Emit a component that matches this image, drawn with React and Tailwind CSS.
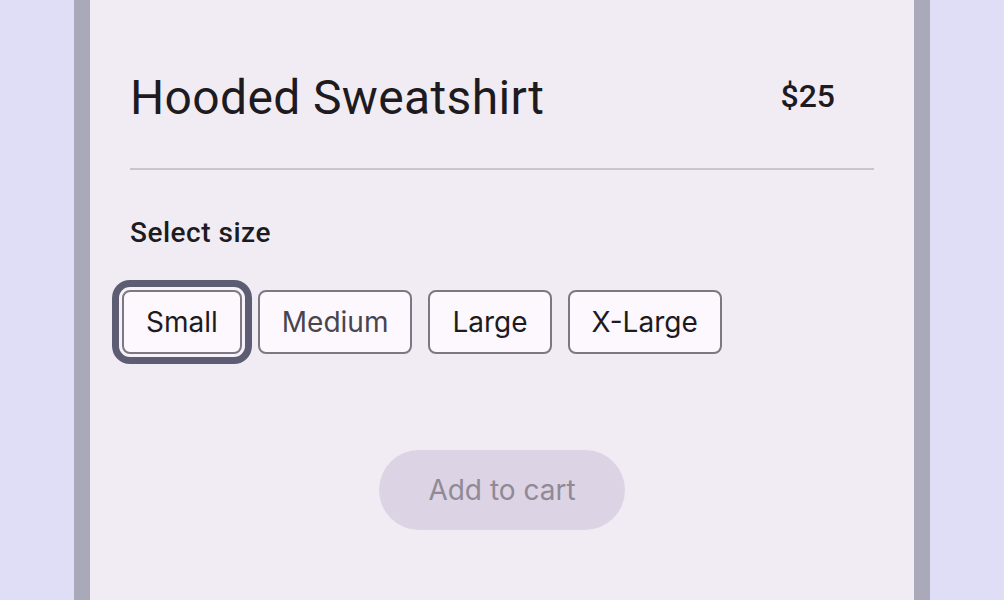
import React from "react";

const sizes = ["Small", "Medium", "Large", "X-Large"];

export default function App() {
  return (
    <div className="h-[600px] w-full overflow-hidden bg-[#e0def7] flex justify-center font-['Roboto',sans-serif]">
      <div className="w-[856px] h-[600px] bg-[#aaa9b9] px-[16px]">
        <div className="h-full bg-[#f1ecf4] px-[40px] pt-[66px]">
          <div className="flex items-start justify-between">
            <h1 className="text-[48px] leading-[64px] font-normal tracking-[0.35px] text-[#1d1b20]">
              Hooded Sweatshirt
            </h1>
            <div className="mt-[6px] mr-[39px] text-[32px] leading-[48px] font-medium text-[#1d1b20]">
              $25
            </div>
          </div>
          <div className="mt-[38px] h-[2px] bg-[#cac4d0]" />
          <div className="mt-[43px] text-[28px] leading-[40px] font-medium tracking-[0.5px] text-[#1d1b20]">
            Select size
          </div>
          <div className="mt-[37px] -ml-[8px] flex gap-[16px] font-['Inter',sans-serif]">
            {sizes.map((s, i) => (
              <button
                key={s}
                className={
                  i === 0
                    ? "h-[64px] px-[22px] rounded-[8px] border-2 border-[#7d7784] bg-[#fdf8fe] text-[28px] font-normal text-[#1d1b20] shadow-[0_0_0_3px_#f7f2f9,0_0_0_10px_#5c5d72]"
                    : i === 1
                    ? "h-[64px] px-[22px] rounded-[8px] border-2 border-[#7d7784] bg-[#fdf8fe] text-[28px] font-normal text-[#49454f]"
                    : "h-[64px] px-[22px] rounded-[8px] border-2 border-[#7d7784] bg-[#fdf8fe] text-[28px] font-normal text-[#1d1b20]"
                }
              >
                {s}
              </button>
            ))}
          </div>
          <div className="mt-[96px] flex justify-center">
            <button className="w-[246px] h-[80px] rounded-full bg-[#dcd3e4] font-['Inter',sans-serif] text-[28px] font-normal text-[#8f8a95]">
              Add to cart
            </button>
          </div>
        </div>
      </div>
    </div>
  );
}
